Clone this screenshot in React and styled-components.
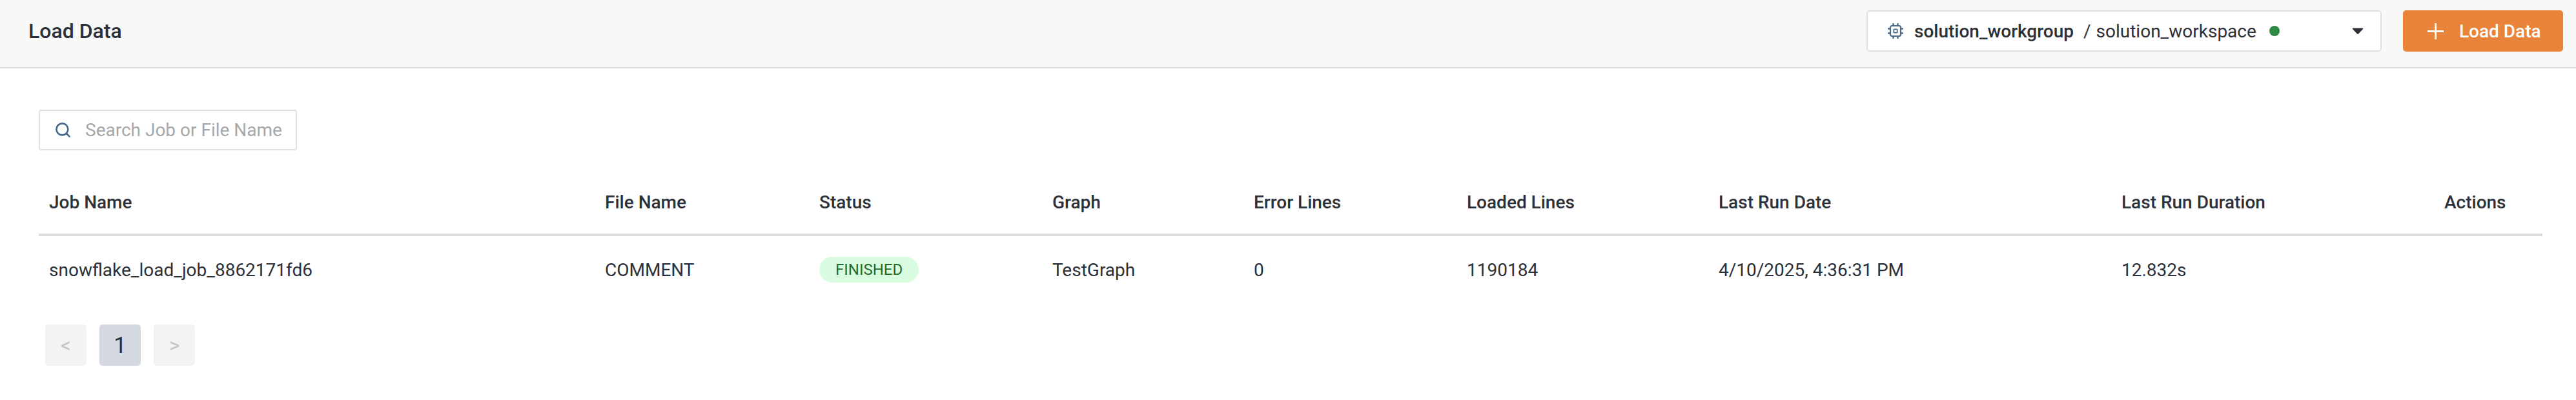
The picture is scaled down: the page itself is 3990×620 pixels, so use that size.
import React from "react";
import styled, { createGlobalStyle } from "styled-components";
import { Search } from "lucide-react";

const Global = createGlobalStyle`
  html, body { margin: 0; padding: 0; background: #fff; }
  body { font-family: Roboto, "Liberation Sans", sans-serif; color: #2c3038; }
`;

const Page = styled.div`
  width: 3990px;
  height: 620px;
  overflow: hidden;
  background: #fff;
`;

const Header = styled.header`
  height: 106px;
  box-sizing: border-box;
  background: #f8f8f8;
  border-bottom: 2px solid #dedede;
  display: flex;
  align-items: center;
  padding: 0 20px 8px 44px;
`;

const Title = styled.h1`
  margin: 0;
  flex: 1;
  font-size: 32px;
  font-weight: 500;
  color: #2c3038;
`;

const WorkspaceSelect = styled.div`
  width: 798px;
  height: 64px;
  box-sizing: border-box;
  background: #fff;
  border: 2px solid #e0e0e0;
  border-radius: 5px;
  display: flex;
  align-items: center;
  padding: 0 26px 0 31px;
  font-size: 28px;
  color: #2c3038;
`;

const Group = styled.span`
  font-weight: 500;
  margin-left: 17px;
`;

const Slash = styled.span`
  margin: 0 8px 0 15px;
`;

const Dot = styled.span`
  width: 16px;
  height: 16px;
  border-radius: 50%;
  background: #2e8b47;
  margin-left: 20px;
`;

const PrimaryButton = styled.button`
  width: 248px;
  height: 64px;
  margin-left: 33px;
  border: 0;
  border-radius: 5px;
  background: #e9833a;
  color: #fff;
  font-family: inherit;
  font-size: 28px;
  font-weight: 500;
  display: flex;
  align-items: center;
  gap: 24px;
  padding: 0 0 0 38px;
`;

const Content = styled.main`
  padding: 64px 52px 0 60px;
`;

const SearchBox = styled.div`
  width: 400px;
  height: 63px;
  box-sizing: border-box;
  border: 2px solid #e0e0e0;
  border-radius: 4px;
  display: flex;
  align-items: center;
  gap: 21px;
  padding: 0 0 0 22px;
`;

const SearchInput = styled.input`
  border: 0;
  outline: 0;
  width: 310px;
  padding: 0;
  font-family: inherit;
  font-size: 28px;
  background: transparent;
  color: #2c3038;
  &::placeholder { color: #a6a8aa; opacity: 1; }
`;

const Table = styled.table`
  width: 3878px;
  margin-top: 31px;
  table-layout: fixed;
  border-collapse: collapse;
`;

const HeadCell = styled.th`
  height: 98px;
  padding: 0 16px;
  text-align: left;
  font-size: 28px;
  font-weight: 500;
  color: #2c3038;
  border-bottom: 4px solid #dbdbdb;
`;

const Cell = styled.td`
  height: 104px;
  padding: 0 16px;
  font-size: 28px;
  font-weight: 400;
  color: #2c3038;
`;

const Badge = styled.span`
  display: inline-flex;
  align-items: center;
  height: 40px;
  padding: 0 25px;
  border-radius: 20px;
  background: #d9fbdf;
  color: #1f6b2b;
  font-size: 24px;
`;

const Pagination = styled.nav`
  display: flex;
  gap: 20px;
  margin: 33px 0 0 10px;
`;

const PageButton = styled.div`
  width: 64px;
  height: 64px;
  border-radius: 5px;
  display: flex;
  align-items: center;
  justify-content: center;
  background: ${(p) => (p.$active ? "#d4d9e1" : "#f3f3f3")};
  color: ${(p) => (p.$active ? "#2c3038" : "#c4c4c4")};
  font-size: ${(p) => (p.$active ? "35px" : "31px")};
`;

const SearchIcon = styled(Search)`
  flex: none;
  color: #46688a;
`;

const IconSvg = styled.svg`
  flex: none;
  display: block;
`;

const CaretIcon = styled(IconSvg)`
  margin-left: auto;
`;

const ChipIcon = () => (
  <IconSvg width="24" height="24" viewBox="0 0 24 24" fill="none" stroke="#4c6a88">
    <rect x="4" y="4" width="16" height="16" rx="2.5" strokeWidth="2.2" />
    <rect x="9.3" y="9.3" width="5.4" height="5.4" rx="0.6" strokeWidth="1.8" />
    <path
      d="M8.5 0V3M15.5 0V3M8.5 21V24M15.5 21V24M0 8.5H3M0 15.5H3M21 8.5H24M21 15.5H24"
      strokeWidth="2.4"
    />
  </IconSvg>
);

const PlusIcon = () => (
  <IconSvg width="25" height="25" viewBox="0 0 25 25" stroke="#fff" strokeWidth="3">
    <path d="M12.5 0V25M0 12.5H25" />
  </IconSvg>
);

const Caret = () => (
  <CaretIcon width="18" height="10" viewBox="0 0 18 10">
    <path d="M1.5 0.5H16.5Q18 0.5 17 2L10 9.4Q9 10 8 9.4L1 2Q0 0.5 1.5 0.5Z" fill="#2c3038" />
  </CaretIcon>
);

const columns = [
  ["Job Name", 861],
  ["File Name", 332],
  ["Status", 361],
  ["Graph", 312],
  ["Error Lines", 330],
  ["Loaded Lines", 390],
  ["Last Run Date", 624],
  ["Last Run Duration", 500],
  ["Actions", 168],
];

const row = [
  "snowflake_load_job_8862171fd6",
  "COMMENT",
  <Badge>FINISHED</Badge>,
  "TestGraph",
  "0",
  "1190184",
  "4/10/2025, 4:36:31 PM",
  "12.832s",
  "",
];

export default function App() {
  return (
    <Page>
      <Global />
      <Header>
        <Title>Load Data</Title>
        <WorkspaceSelect>
          <ChipIcon />
          <Group>solution_workgroup</Group>
          <Slash>/</Slash>
          <span>solution_workspace</span>
          <Dot />
          <Caret />
        </WorkspaceSelect>
        <PrimaryButton>
          <PlusIcon />
          Load Data
        </PrimaryButton>
      </Header>
      <Content>
        <SearchBox>
          <SearchIcon size={27} strokeWidth={2.3} />
          <SearchInput placeholder="Search Job or File Name" />
        </SearchBox>
        <Table>
          <colgroup>
            {columns.map(([name, width]) => (
              <col key={name} width={width} />
            ))}
          </colgroup>
          <thead>
            <tr>
              {columns.map(([name]) => (
                <HeadCell key={name}>{name}</HeadCell>
              ))}
            </tr>
          </thead>
          <tbody>
            <tr>
              {row.map((value, i) => (
                <Cell key={i}>{value}</Cell>
              ))}
            </tr>
          </tbody>
        </Table>
        <Pagination>
          <PageButton>&lt;</PageButton>
          <PageButton $active>1</PageButton>
          <PageButton>&gt;</PageButton>
        </Pagination>
      </Content>
    </Page>
  );
}
